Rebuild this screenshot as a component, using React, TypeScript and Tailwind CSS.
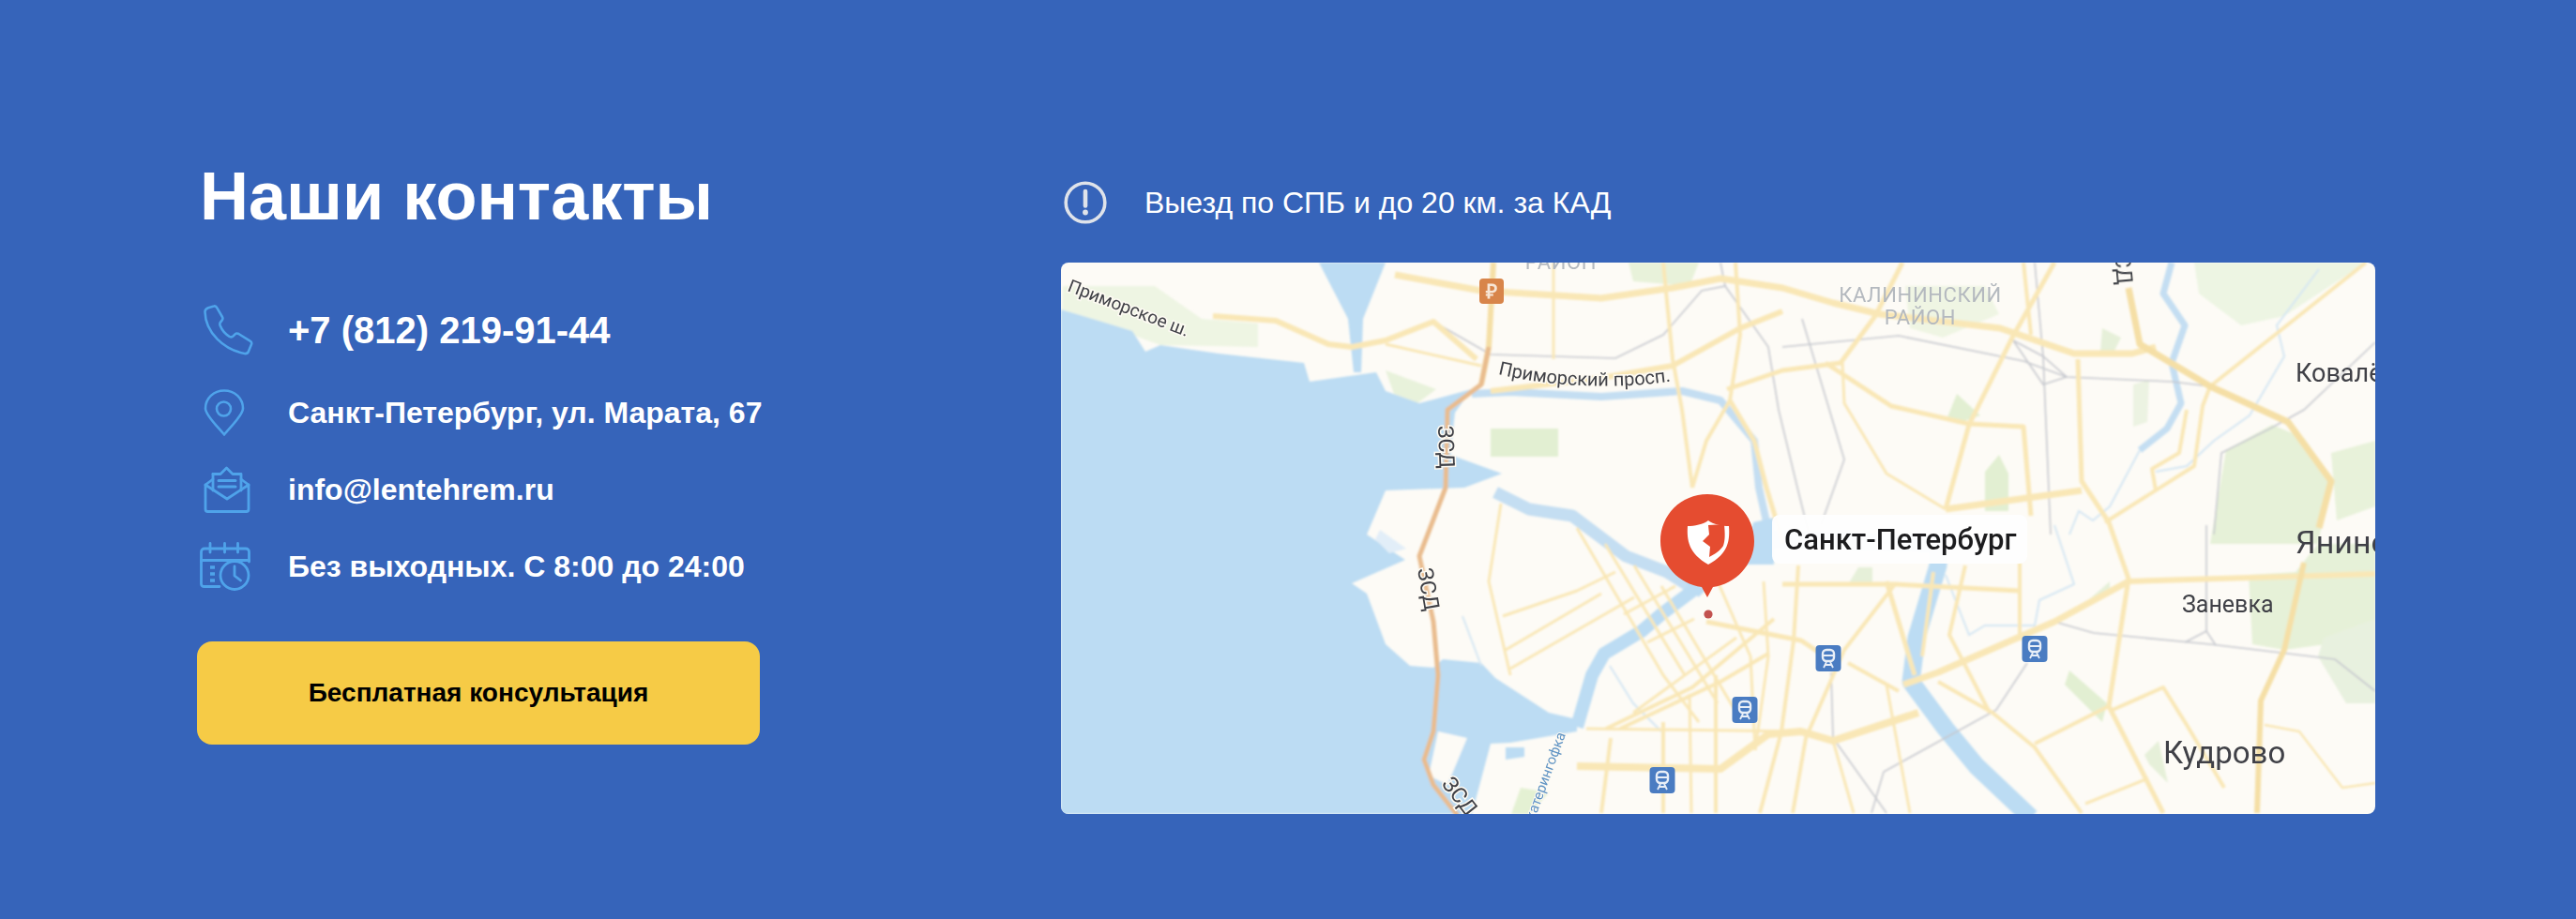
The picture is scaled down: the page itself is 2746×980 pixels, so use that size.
const FONT = "font-['Liberation_Sans',Arial,sans-serif]";

function PhoneIcon() {
  return (
    <svg width="54" height="54" viewBox="0 0 54 54" fill="none" stroke="#4fa3ea" strokeWidth="2.6" strokeLinejoin="round" strokeLinecap="round">
      <path d="M1.5 7.5C1.5 5 3 4 5 3.2L11 1.5C12.5 1 13.5 1.8 14.2 3.2L20 13C20.8 14.5 20.5 15.5 19.6 16.6L18 18.6C17 19.8 17.2 21 17.8 22.6C20 28 23.5 31.5 27.5 33.8C29 34.6 30.5 34.6 31.6 33.4L33.6 31.4C34.8 30.2 36 30.2 37.4 31L49.6 38.6C51 39.4 51.6 40.6 51 42.2L48 49.6C47.2 51.4 45.8 52.4 43.6 52C22 48 2 30 1.5 7.5Z" />
    </svg>
  );
}

function PinIcon() {
  return (
    <svg width="44" height="50" viewBox="0 0 44 50" fill="none" stroke="#4fa3ea" strokeWidth="2.6" strokeLinejoin="round">
      <path d="M22 48.5C16 41 2 28 2 20.5C2 9.5 11 1.5 22 1.5C33 1.5 42 9.5 42 20.5C42 28 28 41 22 48.5Z" />
      <circle cx="21.5" cy="21" r="7.5" />
    </svg>
  );
}

function MailIcon() {
  return (
    <svg width="50" height="50" viewBox="0 0 50 50" fill="none" stroke="#4fa3ea" strokeWidth="2.8" strokeLinejoin="round" strokeLinecap="round">
      <path d="M2 20V46C2 47.5 3 48.5 4.5 48.5H45.5C47 48.5 48 47.5 48 46V20L25 35L2 20Z" />
      <path d="M2 20L10 14M48 20L40 14" />
      <path d="M10 8.5H18L24.5 2L31 8.5H40V26" />
      <path d="M10 8.5V26" />
      <path d="M16 15.5H34M16 22H34" strokeWidth="3" />
    </svg>
  );
}

function CalendarIcon() {
  return (
    <svg width="54" height="52" viewBox="0 0 54 52" fill="none" stroke="#4fa3ea" strokeWidth="2.8" strokeLinejoin="round" strokeLinecap="round">
      <path d="M1.5 21V10.5C1.5 8.5 3 7 5 7H49C51 7 52.5 8.5 52.5 10.5V21" />
      <path d="M1.5 19.5H52.5" />
      <path d="M11 1.5V11M26.5 1.5V11M40.5 1.5V11" />
      <path d="M1.5 19.5V45C1.5 46.5 3 47.5 4.5 47.5H21" />
      <path d="M11 27H16M11 34H16M11 41H16" strokeWidth="3.4" strokeLinecap="butt" />
      <circle cx="37" cy="35.5" r="15" />
      <path d="M37 26V36L43.5 41" />
    </svg>
  );
}

function AlertIcon() {
  return (
    <svg width="46" height="46" viewBox="0 0 46 46" fill="none">
      <circle cx="23" cy="23" r="20.8" stroke="#dfe3ea" strokeWidth="3.6" />
      <path d="M23 11V26.5" stroke="#dfe3ea" strokeWidth="4.6" strokeLinecap="round" />
      <circle cx="23" cy="33.5" r="2.9" fill="#dfe3ea" />
    </svg>
  );
}

type L = [string, number];
const yellow = "#f9e7b6";

const roads: L[] = [
  ["356,13 448,30 576,38 652,27 703,17 769,27 823,43 873,55 1001,70 1080,97 1142,97 1167,90", 7],
  ["162,57 229,62 285,87 310,90 346,83 397,63 443,103", 6],
  ["346,87 448,110", 3],
  ["458,137 576,123 652,110 724,70 769,52", 6],
  ["642,0 652,103 662,157 673,240", 4],
  ["525,0 525,103", 3],
  ["719,0 724,77 713,147 688,190 673,240", 4],
  ["713,147 739,190 752,240 770,300", 5],
  ["897,0 868,57 831,107 769,115 710,135", 5],
  ["815,107 885,153 968,172 1026,175 1034,270", 5],
  ["1059,0 1014,80 968,173 943,263", 5],
  ["1084,103 1088,233 1117,277 1138,337 1117,473 1175,587", 5],
  ["943,263 1088,243", 7],
  ["1225,132 1217,153 1208,217 1113,277", 4],
  ["1200,157 1192,203 1163,220 1167,243", 4],
  ["1026,0 1034,77", 4],
  ["833,107 835,150 880,225 943,263", 3],
  ["1391,0 1225,132", 4],
  ["469,257 456,340 479,440", 3],
  ["479,433 611,357", 3],
  ["474,413 576,353", 3],
  ["471,377 550,350 591,330", 3],
  ["550,283 642,440 680,490", 3],
  ["611,323 700,470", 3],
  ["580,300 665,440", 3],
  ["640,345 720,480", 3],
  ["600,375 655,345", 3],
  ["625,405 675,380", 3],
  ["550,537 703,540 754,503 789,500 823,510 914,480", 8],
  ["581,497 673,453 760,380", 4],
  ["596,497 703,447 754,417", 4],
  ["610,480 720,400", 3],
  ["560,497 789,500", 3],
  ["586,507 576,587", 4],
  ["642,490 642,587", 4],
  ["670,460 672,587", 3],
  ["698,440 698,587", 4],
  ["688,383 789,403 810,417", 5],
  ["700,340 735,420 740,520", 3],
  ["749,340 754,420 740,520", 3],
  ["786,323 781,403 768,500 745,587", 4],
  ["769,343 889,343 1022,350", 5],
  ["1022,320 1022,403", 4],
  ["964,323 947,397 990,480", 4],
  ["889,343 835,413 794,507 780,587", 4],
  ["1138,340 1401,332", 6],
  ["1138,340 1059,383 935,437 898,450", 7],
  ["1121,477 1175,453 1200,493 1240,560", 4],
  ["1117,473 1038,513", 4],
  ["935,447 993,480 1038,517 1088,587", 4],
  ["1092,577 1159,550", 3],
  ["839,427 893,457", 4],
  ["1283,493 1320,500 1366,560 1401,555", 2.5],
  ["880,450 905,587", 3],
  ["823,510 845,587", 3],
  ["910,440 880,340", 5],
  ["930,330 918,420", 4],
];

const thickRoads: L[] = [
  ["1138,27 1150,87 1225,132 1308,170 1354,233 1341,283", 7],
  ["1325,320 1304,413 1279,467 1275,587", 6],
  ["461,0 456,90 448,130", 6],
];

const rails = [
  "397,63 458,98 591,102 642,77 683,30 708,25 703,0",
  "708,25 754,90 765,157 785,240 800,300",
  "769,90 893,78 1026,105 1072,122 1184,127 1225,132",
  "1038,0 1047,100 1055,290",
  "1015,83 1047,130 1072,122 1047,100 1015,83",
  "1401,85 1325,157 1289,177 1237,203 1229,290",
  "1221,280 1221,393",
  "1198,405 1221,393 1231,408",
  "1059,383 1101,395 1225,407 1358,423 1401,457",
  "1030,427 997,477 877,543 864,587",
  "821,437 823,507 868,570 880,587",
  "790,60 835,210 810,280",
];

const thinRivers = [
  "1341,7 1296,67 1304,100 1267,163 1229,190 1200,217 1167,223",
  "943,333 968,397 985,387 1038,387 1043,360 1080,343 1059,280",
  "428,377 448,430",
  "585,430 610,470 640,500",
  "1150,200 1118,260 1100,275 1085,265 1075,290",
];

const greens: [string, string][] = [
  ["1242,200 1291,173 1325,187 1354,230 1340,300 1316,330 1266,333 1270,407 1304,413 1401,400 1401,300 1225,300", "#e6f1d8"],
  ["1208,0 1391,0 1304,57 1258,67 1213,33", "#edf5e3"],
  ["1354,203 1401,190 1401,260 1360,275", "#e8f2da"],
  ["1346,400 1401,380 1401,470 1370,470 1340,420", "#e8f1df"],
  ["458,177 530,177 530,207 458,207", "#e2efd2"],
  ["346,115 400,135 380,150 355,140", "#e8f2db"],
  ["1,50 2,25 100,25 150,60 210,65 210,90 106,88", "#eef5e3"],
  ["605,0 680,0 670,25 610,20", "#e8f2da"],
  ["955,140 980,163 955,172 945,165", "#e2efd2"],
  ["985,223 1000,205 1010,225 1010,265 985,265", "#e2efd2"],
  ["900,25 985,25 1000,55 940,80 905,70", "#eff5e3"],
  ["1075,435 1115,470 1110,490 1070,450", "#e2efd2"],
  ["490,560 520,565 500,588 480,588", "#e4f1d3"],
  ["850,325 865,325 865,345 838,345", "#e6f0d9"],
  ["1118,340 1095,360 1118,350", "#e6f0d9"],
  ["1155,525 1170,510 1180,555 1160,535", "#e6f0d9"],
  ["1110,70 1130,80 1120,100 1108,95", "#e6f0d9"],
  ["1143,130 1160,125 1158,170 1143,175", "#ecf3e2"],
];

function MetroBadge({ x, y }: { x: number; y: number }) {
  return (
    <g transform={`translate(${x} ${y})`}>
      <rect x="-13.5" y="-14" width="27" height="28" rx="4" fill="#4a7cc2" />
      <rect x="-6" y="-9" width="12" height="12" rx="4" fill="none" stroke="#e8eef7" strokeWidth="2.4" />
      <path d="M-6 -3H6" stroke="#e8eef7" strokeWidth="2" />
      <path d="M-5 10L-2 4M5 10L2 4M-4 7H4" stroke="#e8eef7" strokeWidth="1.8" fill="none" />
    </g>
  );
}

function RoadLabel({ x, y, r, size = 20, children }: { x: number; y: number; r: number; size?: number; children: string }) {
  return (
    <text
      transform={`translate(${x} ${y}) rotate(${r})`}
      fontFamily="Roboto, 'Liberation Sans', sans-serif"
      fontSize={size}
      fill="#3f4146"
      stroke="#fdfaf3"
      strokeWidth="3"
      paintOrder="stroke"
    >
      {children}
    </text>
  );
}

function CityMap() {
  return (
    <svg viewBox="0 0 1401 588" width="1401" height="588" className="block">
      <defs>
        <filter id="soft" x="-2%" y="-2%" width="104%" height="104%">
          <feGaussianBlur stdDeviation="1.3" />
        </filter>
        <filter id="softText">
          <feGaussianBlur stdDeviation="0.6" />
        </filter>
        <path id="prim" d="M466 119C520 132 600 138 676 122" />
      </defs>
      <rect width="1401" height="588" fill="#fdfbf6" />
      <g filter="url(#soft)">
        {greens.map(([p, c], i) => (
          <polygon key={i} points={p} fill={c} />
        ))}
        <path
          d="M0 50L40 62L76 73L90 95L106 88L168 97L259 107L265 127L336 117L346 137L382 150L438 135L420 160L415 205L470 225L430 240L346 243L326 290L367 317L310 342L326 353L346 407L372 430L397 432L407 423L448 427L463 443L520 480L550 487L550 500L479 512L458 513L438 588L0 588Z"
          fill="#bcdcf3"
        />
        <polygon points="275,0 346,0 322,60 320,117 312,117 306,60" fill="#bcdcf3" />
        <polygon points="402,500 433,507 412,557 392,547" fill="#fdfbf6" />
        <polygon points="474,517 494,517 494,527 474,530" fill="#bcdcf3" />
        <polygon points="340,285 368,305 350,310 335,295" fill="#e2eef8" />
        <polyline points="438,140 479,138 576,143 662,137 703,147 739,190 744,240 755,290" fill="none" stroke="#c4def2" strokeWidth="8" strokeLinejoin="round" />
        <polyline points="463,245 499,263 545,270 602,313 646,330 673,347" fill="none" stroke="#c4def2" strokeWidth="13" strokeLinejoin="round" />
        <polyline points="680,345 640,375 619,393 579,417 566,440 550,495" fill="none" stroke="#bcdcf3" strokeWidth="14" strokeLinejoin="round" />
        <polygon points="738,277 760,272 760,322 725,322" fill="#bcdcf3" />
        <polyline points="673,350 720,305 760,295 935,300 935,323 912,400 906,447 943,497 976,537 1034,592" fill="none" stroke="#bcdcf3" strokeWidth="19" strokeLinejoin="round" />
        <polyline points="1184,0 1175,33 1198,67 1184,107 1194,150 1179,177 1150,200" fill="none" stroke="#c4def2" strokeWidth="7" strokeLinejoin="round" />
        {thinRivers.map((p, i) => (
          <polyline key={i} points={p} fill="none" stroke="#d4e6f3" strokeWidth="2" />
        ))}
        {rails.map((p, i) => (
          <polyline key={i} points={p} fill="none" stroke="#c6c8ce" strokeWidth="1.6" />
        ))}
        {roads.map(([p, w], i) => (
          <polyline key={i} points={p} fill="none" stroke={yellow} strokeWidth={w} strokeLinejoin="round" />
        ))}
        {thickRoads.map(([p, w], i) => (
          <polyline key={i} points={p} fill="none" stroke="#f5dfa6" strokeWidth={w} strokeLinejoin="round" />
        ))}
        <polyline points="456,90 448,130 412,157 410,240 382,313 397,383 402,440 397,500 387,530 397,557 423,590" fill="none" stroke="#e9bc8e" strokeWidth="5" strokeLinejoin="round" />
      </g>

      <g filter="url(#softText)">
        <text fontFamily="Roboto, 'Liberation Sans', sans-serif" fontSize="19" fill="#3f4146" stroke="#fdfaf3" strokeWidth="3" paintOrder="stroke" transform="translate(6 30) rotate(21)">
          Приморское ш.
        </text>
        <text fontFamily="Roboto, 'Liberation Sans', sans-serif" fontSize="20" fill="#3f4146" stroke="#fdfaf3" strokeWidth="3" paintOrder="stroke">
          <textPath href="#prim">Приморский просп.</textPath>
        </text>
        <RoadLabel x={402} y={174} r={88} size={23}>ЗСД</RoadLabel>
        <RoadLabel x={380} y={327} r={80} size={23}>ЗСД</RoadLabel>
        <RoadLabel x={405} y={556} r={52} size={23}>ЗСД</RoadLabel>
        <RoadLabel x={1122} y={-22} r={85} size={23}>ЗСД</RoadLabel>
        <text transform="translate(538 503) rotate(-70)" textAnchor="end" fontFamily="Roboto, 'Liberation Sans', sans-serif" fontSize="15" fill="#5f93c4" stroke="#fdfaf3" strokeWidth="2" paintOrder="stroke">
          Екатерингофка
        </text>
        <text x="916" y="42" textAnchor="middle" fontFamily="Roboto, 'Liberation Sans', sans-serif" fontSize="22" fill="#b4b9bf" letterSpacing="0.6">КАЛИНИНСКИЙ</text>
        <text x="916" y="66" textAnchor="middle" fontFamily="Roboto, 'Liberation Sans', sans-serif" fontSize="22" fill="#b4b9bf" letterSpacing="0.6">РАЙОН</text>
        <text x="533" y="7" textAnchor="middle" fontFamily="Roboto, 'Liberation Sans', sans-serif" fontSize="22" fill="#b4b9bf" letterSpacing="0.6">РАЙОН</text>
        <text x="1316" y="127" fontFamily="Roboto, 'Liberation Sans', sans-serif" fontSize="27" fill="#3f4146">Ковалёво</text>
        <text x="1316" y="310" fontFamily="Roboto, 'Liberation Sans', sans-serif" fontSize="34" fill="#3f4146">Янино</text>
        <text x="1195" y="373" fontFamily="Roboto, 'Liberation Sans', sans-serif" fontSize="25" fill="#3f4146">Заневка</text>
        <text x="1175" y="534" fontFamily="Roboto, 'Liberation Sans', sans-serif" fontSize="33" fill="#3f4146">Кудрово</text>
      </g>

      <rect x="446" y="17" width="26" height="27" rx="4" fill="#d8854a" />
      <text x="459" y="38" textAnchor="middle" fontFamily="'Liberation Sans', sans-serif" fontWeight="700" fontSize="21" fill="#f7e6d6">₽</text>
      <MetroBadge x={818} y={422} />
      <MetroBadge x={729} y={477} />
      <MetroBadge x={641} y={552} />
      <MetroBadge x={1038} y={412} />

      <rect x="758" y="269" width="272" height="52" rx="8" fill="#fefefe" fillOpacity="0.96" />
      <text x="771" y="306" fontFamily="Roboto, 'Liberation Sans', sans-serif" fontWeight="500" fontSize="31" fill="#1c1c1e">Санкт-Петербург</text>

      <path d="M689 247C661 247 639 269 639 297C639 322 659 343 683 346L689 357L695 346C719 343 739 322 739 297C739 269 717 247 689 247Z" fill="#e54c30" />
      <circle cx="690" cy="375" r="4.6" fill="#c2524f" />
      <path d="M668 281C675 281 685 279 690 275C695 279 705 281 712 281C713 296 712 310 690 322C669 310 667 296 668 281Z" fill="#fff" />
      <path d="M690 280L707 279C708 290 708 296 706 302C703 307 697 311 691 314L692 303L684 297L691 290Z" fill="#e54c30" />
    </svg>
  );
}

function ContactRow({ icon, className, height, pad, children }: { icon: React.ReactNode; className: string; height: string; pad: string; children: string }) {
  return (
    <div className={`flex items-center ${height}`}>
      <div className={`flex w-[97px] shrink-0 items-center ${pad}`}>{icon}</div>
      <span className={`whitespace-nowrap font-bold text-white ${className}`}>{children}</span>
    </div>
  );
}

export default function App() {
  return (
    <div className={`flex h-[980px] w-full items-start bg-[#3664ba] pl-[210px] pt-[153px] ${FONT}`}>
      <div className="w-[600px]">
        <h2 className="pl-[3px] text-[72px] font-bold leading-[112px] text-white">Наши контакты</h2>
        <div className="mt-[40px]">
          <ContactRow icon={<PhoneIcon />} height="h-[94px]" pad="pl-[7px]" className="text-[40px] leading-[46px]">+7 (812) 219-91-44</ContactRow>
          <ContactRow icon={<PinIcon />} height="h-[82px]" pad="pl-[7px]" className="text-[32px] leading-[38px]">Санкт-Петербург, ул. Марата, 67</ContactRow>
          <ContactRow icon={<MailIcon />} height="h-[82px]" pad="pl-[7px]" className="text-[32px] leading-[38px]">info@lentehrem.ru</ContactRow>
          <ContactRow icon={<CalendarIcon />} height="h-[82px]" pad="pl-[3px]" className="text-[32px] leading-[38px]">Без выходных. С 8:00 до 24:00</ContactRow>
        </div>
        <button className="mt-[39px] flex h-[110px] w-[600px] items-center justify-center rounded-[16px] bg-[#f6cb46] text-[28px] font-bold text-black">
          Бесплатная консультация
        </button>
      </div>
      <div className="ml-[321px] w-[1401px]">
        <div className="flex h-[127px] items-start pl-[3px] pt-[40px]">
          <AlertIcon />
          <span className="ml-[40px] text-[32px] leading-[46px] text-white">Выезд по СПБ и до 20 км. за КАД</span>
        </div>
        <div className="h-[588px] w-[1401px] overflow-hidden rounded-[8px]">
          <CityMap />
        </div>
      </div>
    </div>
  );
}
